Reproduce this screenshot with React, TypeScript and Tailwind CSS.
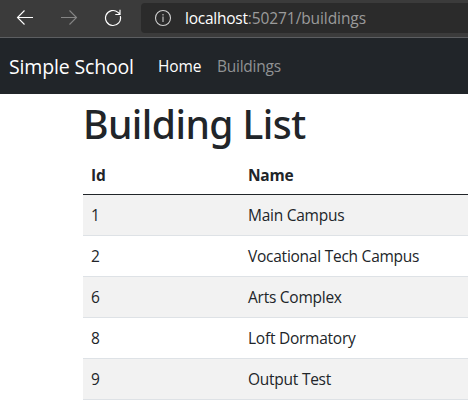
const buildings = [
  { id: 1, name: "Main Campus" },
  { id: 2, name: "Vocational Tech Campus" },
  { id: 6, name: "Arts Complex" },
  { id: 8, name: "Loft Dormatory" },
  { id: 9, name: "Output Test" },
];

function BrowserBar() {
  return (
    <div className="flex h-[38px] items-start border-b border-[#5c5e61] bg-[#3b3b3b] pt-[3px]">
      <div className="flex h-[30px] w-[141px] shrink-0 items-center">
        <svg className="ml-4 size-[18px]" viewBox="0 0 18 18" fill="none" stroke="#fff" strokeWidth="1.1">
          <path d="M17 8.5H1.5M8.5 1.5l-7 7 7 7" />
        </svg>
        <svg className="ml-[26px] size-[18px]" viewBox="0 0 18 18" fill="none" stroke="#858585" strokeWidth="1.1">
          <path d="M1 8.5h15.5M9.500 1.5l7 7-7 7" />
        </svg>
        <svg className="ml-[26px] size-[18px]" viewBox="0 0 18 18" fill="none" stroke="#fff" strokeWidth="1.2">
          <path d="M16.300 7.200A7.500 7.500 0 1 1 14 3.400L15.800 5M16 .8v4.700h-4.700" />
        </svg>
      </div>
      <div className="flex h-[30px] flex-1 items-center rounded-l bg-[#2b2b2b] pl-[13px]">
        <svg className="size-[18px] shrink-0" viewBox="0 0 18 18" fill="none" stroke="#d0d0d0" strokeWidth="1.1">
          <circle cx="9" cy="9" r="7.500" />
          <path d="M9 7.500v5.500M9 5v1.500" strokeWidth="1.400" stroke="#a8a8a8" />
        </svg>
        <div className="ml-[13px] pt-0.5 text-[15.5px] whitespace-nowrap text-[#9b9b9b]">
          <span className="tracking-[-0.24px] text-white">localhost</span>
          <span className="tracking-[-0.09px]">:50271/buildings</span>
        </div>
      </div>
    </div>
  );
}

function Navbar() {
  return (
    <nav className="flex h-14 items-center bg-[#212529] pt-0.5 pl-[9px] whitespace-nowrap">
      <a className="w-[149px] text-[19.5px] tracking-[-0.16px] text-white">Simple School</a>
      <a className="w-[59px] text-[15.5px] tracking-[-0.1px] text-white">Home</a>
      <a className="text-[15.5px] tracking-[-0.25px] text-[#909294]">Buildings</a>
    </nav>
  );
}

export default function App() {
  return (
    <div className="h-[406px] w-[468px] overflow-hidden bg-white font-['Open_Sans','Noto_Sans',sans-serif] text-[15.5px] tracking-[-0.25px] text-[#212529]">
      <BrowserBar />
      <Navbar />
      <main className="pl-[83px]">
        <h1 className="mb-[11px] h-12 font-['Noto_Sans','Open_Sans',sans-serif] text-[39px] leading-[60px] font-medium tracking-[-0.55px] whitespace-nowrap">Building List</h1>
        <table className="w-full table-fixed border-collapse text-left leading-6">
          <colgroup>
            <col className="w-[157px]" />
            <col />
          </colgroup>
          <thead>
            <tr className="h-[41px] border-b border-[#212529] font-bold">
              <th className="px-2 pt-[3px]">Id</th>
              <th className="px-2 pt-[3px]">Name</th>
            </tr>
          </thead>
          <tbody>
            {buildings.map((b) => (
              <tr key={b.id} className="h-[41px] border-b border-[#dee2e6] odd:bg-[#f2f2f2]">
                <td className="px-2 pt-px">{b.id}</td>
                <td className="px-2 pt-px">{b.name}</td>
              </tr>
            ))}
          </tbody>
        </table>
      </main>
    </div>
  );
}
